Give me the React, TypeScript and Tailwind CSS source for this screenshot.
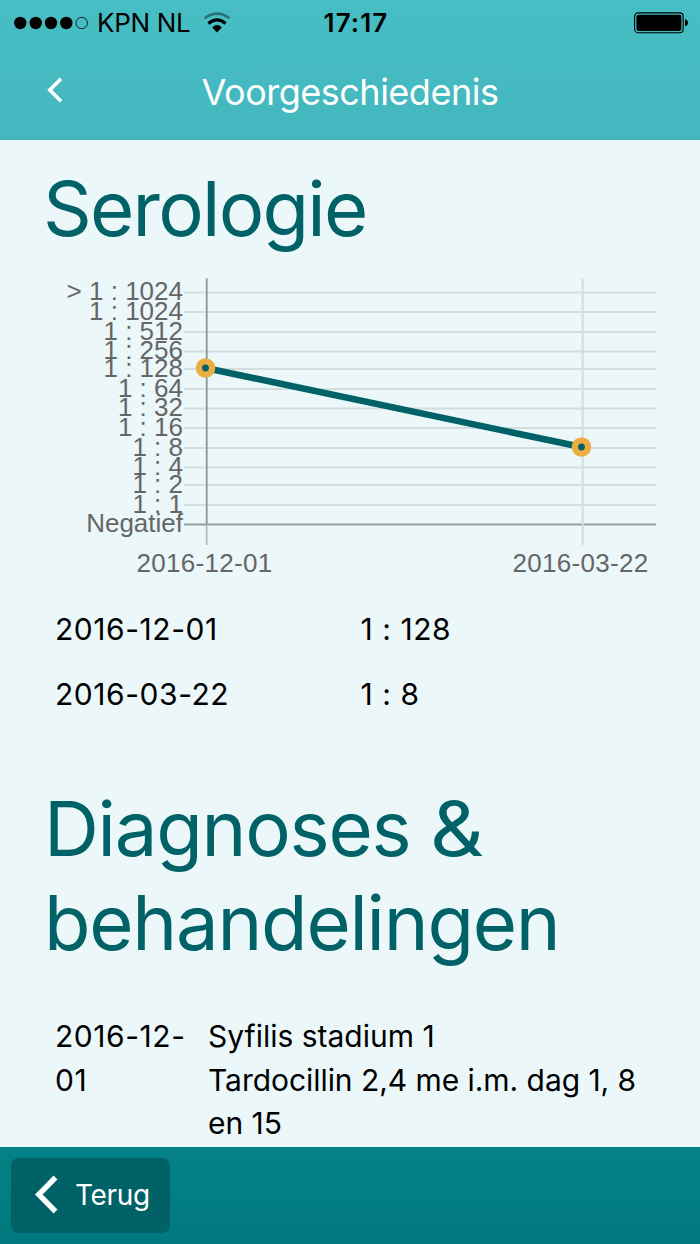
import React from 'react';

const GRID = [
  { label: '> 1 : 1024', y: 292.5 },
  { label: '1 : 1024', y: 312 },
  { label: '1 : 512', y: 332 },
  { label: '1 : 256', y: 351.5 },
  { label: '1 : 128', y: 369 },
  { label: '1 : 64', y: 389 },
  { label: '1 : 32', y: 408.5 },
  { label: '1 : 16', y: 428 },
  { label: '1 : 8', y: 448 },
  { label: '1 : 4', y: 467.5 },
  { label: '1 : 2', y: 485 },
  { label: '1 : 1', y: 505 },
  { label: 'Negatief', y: 524.5 },
];

const POINTS = [
  { date: '2016-12-01', titer: '1 : 128', x: 205.5, y: 368 },
  { date: '2016-03-22', titer: '1 : 8', x: 581.5, y: 447 },
];

const StatusBar = () => (
  <div className="flex h-[46px] items-center px-3.5 text-black">
    <div className="flex flex-1 items-center">
      <svg width="75" height="14" viewBox="0 0 75 14">
        {[6.3, 21.7, 37, 52.3].map((cx) => (
          <circle key={cx} cx={cx} cy="7" r="6.2" />
        ))}
        <circle cx="67.7" cy="7" r="5.7" fill="none" stroke="currentColor" strokeWidth="0.8" />
      </svg>
      <span className="ml-2 text-[26px] leading-none tracking-[-0.3px]">KPN NL</span>
      <svg className="ml-[13px]" width="28" height="22" viewBox="0 0 28 22" fill="none" stroke="currentColor">
        <path d="M1.6 6.2 Q14 -3 26.4 6.2" strokeWidth="2.6" opacity="0.4" />
        <path d="M5.4 11.4 Q14 4.4 22.6 11.4" strokeWidth="3.2" />
        <path d="M9.2 15.4 Q14 10.8 18.8 15.4 L14 20.4 Z" fill="currentColor" stroke="none" />
      </svg>
    </div>
    <span className="pl-2 text-[26px] font-semibold leading-none tracking-[1.1px]">17:17</span>
    <div className="-ml-1 flex flex-1 justify-end">
      <svg className="-mr-0.5" width="54" height="22" viewBox="0 0 54 22">
        <rect x="0.6" y="0.9" width="48.6" height="19.8" rx="3.5" fill="none" stroke="currentColor" strokeWidth="1.1" />
        <rect x="2.4" y="2.7" width="45" height="16.2" rx="1.8" />
        <path d="M51 7.2 Q54 8 54 10.8 Q54 13.6 51 14.4 Z" />
      </svg>
    </div>
  </div>
);

const TiterChart = () => (
  <svg className="block" width="700" height="340" viewBox="0 256 700 340">
    {GRID.map((line) => (
      <line
        key={line.label}
        x1="184"
        x2="656"
        y1={line.y}
        y2={line.y}
        stroke={line.label === 'Negatief' ? '#969f9f' : '#d2dddd'}
        strokeWidth="2"
      />
    ))}
    <line x1="206.7" x2="206.7" y1="278.5" y2="524.5" stroke="#8c9495" strokeWidth="1.8" />
    <line x1="206.7" x2="206.7" y1="524.5" y2="545" stroke="#b5bdbe" strokeWidth="1.8" />
    <line x1="582.7" x2="582.7" y1="278.5" y2="545" stroke="#d2dddd" strokeWidth="2" />
    <g fill="#666666" fontFamily="Liberation Sans, sans-serif" fontSize="26">
      {GRID.map((line) => (
        <text key={line.label} x="183" y={line.y + 7.8} textAnchor="end">
          {line.label}
        </text>
      ))}
      {POINTS.map((p) => (
        <text key={p.date} x={p.x - 1} y="571.5" textAnchor="middle" letterSpacing="0.3">
          {p.date}
        </text>
      ))}
    </g>
    <path
      d={POINTS.map((p, i) => `${i ? 'L' : 'M'}${p.x} ${p.y}`).join(' ')}
      fill="none"
      stroke="#006266"
      strokeWidth="6.5"
    />
    {POINTS.map((p) => (
      <circle key={p.date} cx={p.x} cy={p.y} r="6.6" fill="#006266" stroke="#ecae42" strokeWidth="6.4" />
    ))}
  </svg>
);

export default function App() {
  return (
    <div className="flex h-[1244px] w-[700px] flex-col overflow-hidden bg-[#ebf7f9] font-['Inter','Liberation_Sans',sans-serif]">
      <header className="h-[140px] shrink-0 bg-linear-to-b from-[#47bec4] to-[#43b7be]">
        <StatusBar />
        <div className="flex h-[94px] items-center px-[46px] pb-[3px] text-white">
          <svg className="-mt-[3px]" width="18" height="28" viewBox="0 0 18 28" fill="none" stroke="currentColor" strokeWidth="3.6">
            <path d="M15 2.8 L3.8 14 L15 25.2" />
          </svg>
          <h1 className="flex-1 pr-[18px] text-center text-[36px] leading-none tracking-[-0.5px]">Voorgeschiedenis</h1>
        </div>
      </header>

      <main className="min-h-0 flex-1 overflow-hidden pt-[21px]">
        <h2 className="mb-px pl-[43px] text-[76px] leading-[94px] tracking-[-1.75px] text-[#006266]">Serologie</h2>
        <TiterChart />
        <div className="pt-px text-[30px] leading-[43px] text-black">
          {POINTS.map((p) => (
            <div key={p.date} className="flex py-[11px] pl-[55px] tracking-[0.55px]">
              <span className="w-[305.5px]">{p.date}</span>
              <span>{p.titer}</span>
            </div>
          ))}
        </div>

        <h2 className="mt-[54px] pl-11 text-[76px] leading-[94px] tracking-[-1.25px] text-[#006266]">
          Diagnoses <span className="inline-block origin-left scale-x-[1.1]">&amp;</span>
          <br />
          behandelingen
        </h2>
        <div className="mt-[46px] flex pl-[55px] text-[30px] leading-[43.5px] text-black">
          <div className="w-[153px] pr-4 tracking-[0.55px]">2016-12-01</div>
          <div>
            <p>Syfilis stadium 1</p>
            <p className="tracking-[-0.05px]">
              Tardocillin 2,4 me i.m. dag 1, 8
              <br />
              en 15
            </p>
          </div>
        </div>
      </main>

      <footer className="h-[97px] shrink-0 bg-linear-to-b from-[#058287] to-[#00797e] pl-[11px] pt-[11px]">
        <button className="flex h-[75px] w-[159px] items-center rounded-lg bg-[#006266] pb-0.5 pl-6 text-white">
          <svg width="24" height="40" viewBox="0 0 24 40" fill="none" stroke="currentColor" strokeWidth="5.4">
            <path d="M20.5 2.5 L3.7 19.5 L20.5 36.5" />
          </svg>
          <span className="ml-4 text-[28px] leading-none tracking-[-0.3px]">Terug</span>
        </button>
      </footer>
    </div>
  );
}
